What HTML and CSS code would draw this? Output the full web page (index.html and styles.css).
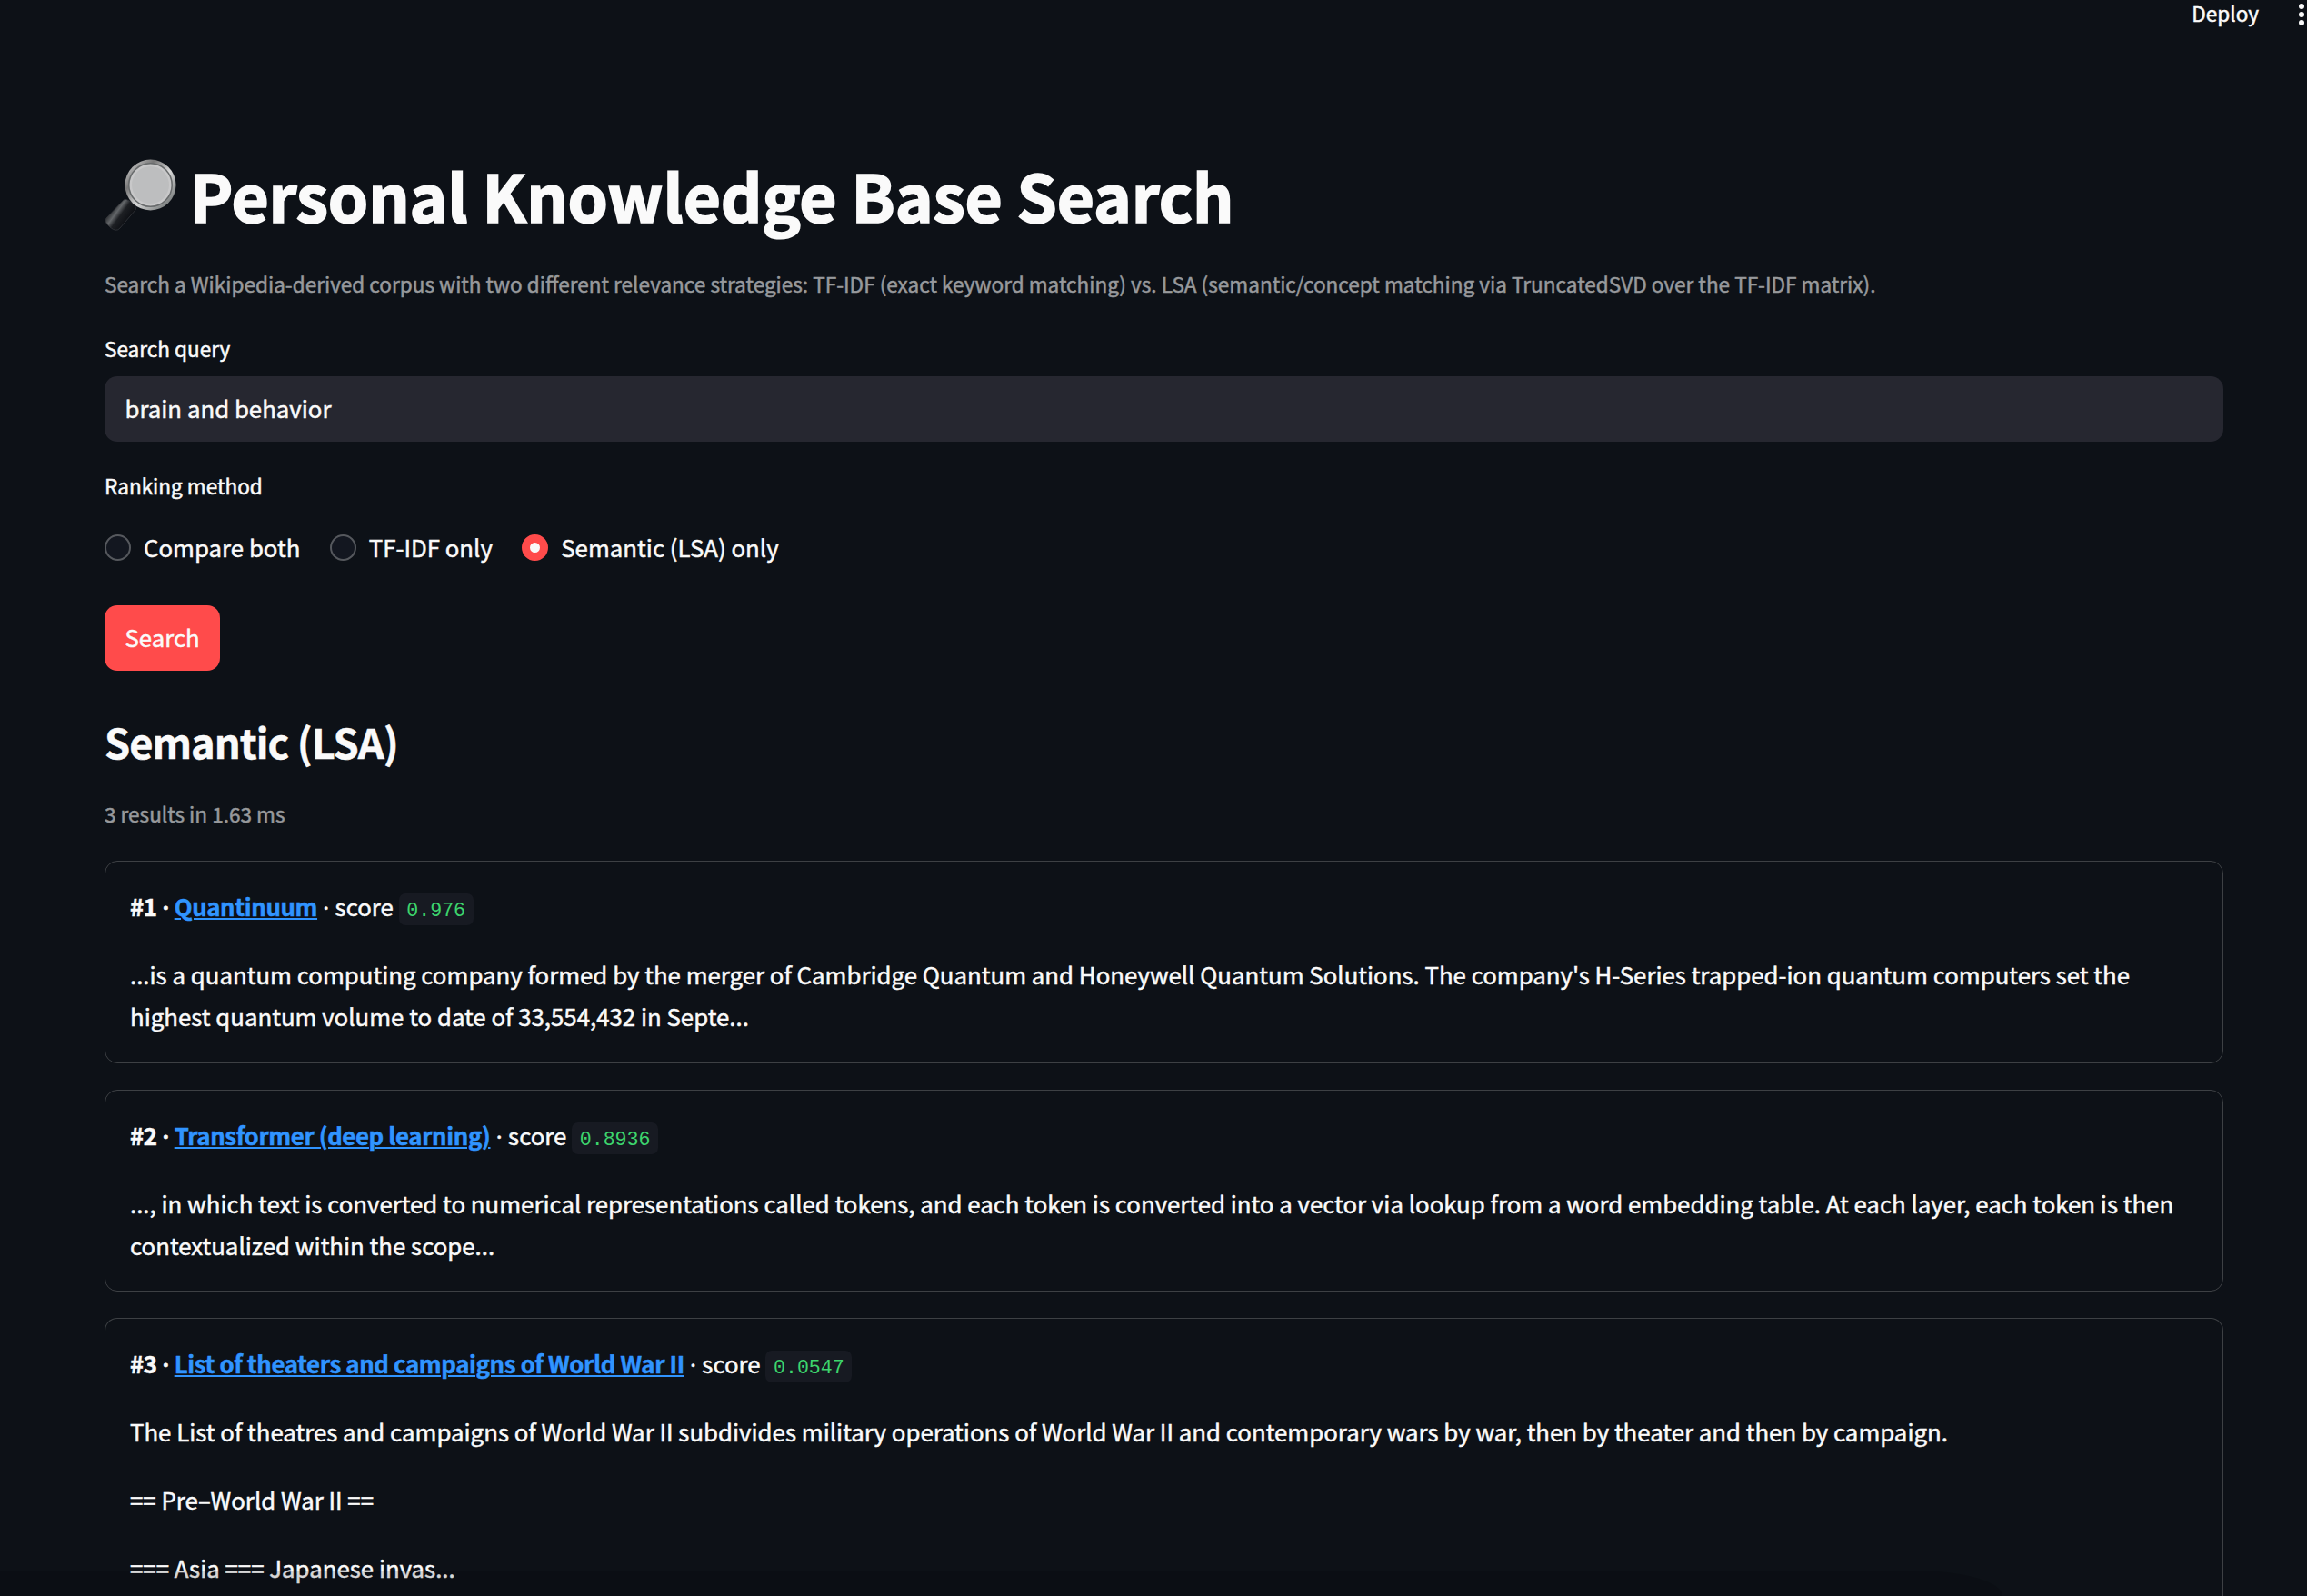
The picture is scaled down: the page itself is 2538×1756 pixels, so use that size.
FILE: index.html
```html
<!DOCTYPE html>
<html lang="en">
<head>
<meta charset="utf-8">
<title>Personal Knowledge Base Search</title>
<link rel="stylesheet" href="styles.css">
</head>
<body>
<header class="toolbar">
  <span class="deploy">Deploy</span>
  <svg class="menu" width="6" height="24" viewBox="0 0 6 24"><circle cx="3" cy="3" r="3"/><circle cx="3" cy="12" r="3"/><circle cx="3" cy="21" r="3"/></svg>
</header>
<main class="page">
  <h1 class="title">
    <svg class="lens" width="80" height="80" viewBox="0 0 80 80">
      <defs>
        <linearGradient id="rim" x1="0" y1="0" x2="1" y2="1"><stop offset="0" stop-color="#e8e8e8"/><stop offset=".3" stop-color="#777"/><stop offset=".55" stop-color="#d8d8d8"/><stop offset="1" stop-color="#555b5b"/></linearGradient>
        <linearGradient id="grip" gradientUnits="userSpaceOnUse" x1="8" y1="52" x2="30" y2="68"><stop offset="0" stop-color="#16181b"/><stop offset=".3" stop-color="#64676a"/><stop offset=".5" stop-color="#1d1f23"/><stop offset="1" stop-color="#07090e"/></linearGradient>
      </defs>
      <path d="M25 46l9 8-3 4-9-8z" fill="#8d9090"/>
      <path d="M21 45Q24 43 30 48Q36 53 34 56L17 76Q13 81 6 75Q-1 69 2 65Z" fill="url(#grip)" stroke="#33363b" stroke-width=".8"/>
      <circle cx="50.500" cy="28.500" r="28" fill="url(#rim)"/>
      <circle cx="50.500" cy="28.500" r="24.500" fill="#686b6c"/>
      <circle cx="50.500" cy="28.500" r="23" fill="#c8c8c9"/>
      <circle cx="50.500" cy="28.500" r="20.500" fill="#bdbebf"/>
    </svg>
    <span class="title-text">Personal Knowledge Base Search</span>
  </h1>
  <p class="caption intro">Search a Wikipedia-derived corpus with two different relevance strategies: TF-IDF (exact keyword matching) vs. LSA (semantic/concept matching via TruncatedSVD over the TF-IDF matrix).</p>
  <label class="label" for="query">Search query</label>
  <input class="query" id="query" type="text" value="brain and behavior">
  <div class="label method">Ranking method</div>
  <div class="radios">
    <label class="radio"><span class="dot"></span><span>Compare both</span></label>
    <label class="radio"><span class="dot"></span><span>TF-IDF only</span></label>
    <label class="radio"><span class="dot dot-on"></span><span>Semantic (LSA) only</span></label>
  </div>
  <button class="search" type="button">Search</button>
  <h2 class="heading">Semantic (LSA)</h2>
  <p class="caption count">3 results in 1.63 ms</p>
  <section class="results">
    <article class="card">
      <p><b>#1 <i class="sep">·</i> <a href="#">Quantinuum</a></b> <i class="sep">·</i> score <code>0.976</code></p>
      <p>...is a quantum computing company formed by the merger of Cambridge Quantum and Honeywell Quantum Solutions. The company's H-Series trapped-ion quantum computers set the <br>highest quantum volume to date of 33,554,432 in Septe...</p>
    </article>
    <article class="card">
      <p><b>#2 <i class="sep">·</i> <a href="#">Transformer (deep learning)</a></b> <i class="sep">·</i> score <code>0.8936</code></p>
      <p>..., in which text is converted to numerical representations called tokens, and each token is converted into a vector via lookup from a word embedding table. At each layer, each token is then <br>contextualized within the scope...</p>
    </article>
    <article class="card">
      <p><b>#3 <i class="sep">·</i> <a href="#">List of theaters and campaigns of World War II</a></b> <i class="sep">·</i> score <code>0.0547</code></p>
      <p>The List of theatres and campaigns of World War II subdivides military operations of World War II and contemporary wars by war, then by theater and then by campaign.</p>
      <p>== Pre–World War II ==</p>
      <p>=== Asia === Japanese invas...</p>
    </article>
  </section>
</main>
<div class="shade"></div>
</body>
</html>
```

FILE: styles.css
```css
* { box-sizing: border-box; }
html, body { margin: 0; height: 1756px; overflow: hidden; }
body {
  background: #0d1117;
  color: #fafafa;
  font-family: "Noto Sans CJK SC", "Source Sans Pro", sans-serif;
  font-size: 25.8px;
  line-height: 46px;
  -webkit-text-stroke: 0.5px currentColor;
}
p, h1, h2 { margin: 0; }
.toolbar {
  height: 32px;
  display: flex;
  justify-content: flex-end;
  align-items: center;
  padding-right: 3px;
  gap: 44px;
}
.deploy { font-size: 22.56px; line-height: 28px; padding-bottom: 4px; }
.menu { fill: #fafafa; }
.page { padding: 0 92px 0 115px; }
.title {
  display: flex;
  align-items: center;
  height: 95px;
  margin-top: 135px;
  gap: 14px;
  font-size: 71px;
  line-height: 95px;
  font-weight: 700;
  letter-spacing: -0.13px;
  -webkit-text-stroke: 1.7px currentColor;
}
.caption { color: #97999c; font-size: 22.57px; line-height: 40px; white-space: nowrap; }
.intro { margin-top: 31px; }
.label { display: block; font-size: 22.56px; line-height: 32px; }
label.label { margin-top: 34px; }
.query {
  display: block;
  width: 100%;
  height: 72px;
  margin-top: 15px;
  padding: 0 22.5px 4px;
  border: 0;
  border-radius: 14px;
  background: #262730;
  color: inherit;
  font: inherit;
  -webkit-text-stroke: inherit;
}
.method { margin-top: 32px; }
.radios { display: flex; gap: 32.4px; margin-top: 29px; }
.radio { display: flex; align-items: center; gap: 14px; }
.dot { width: 29px; height: 29px; border-radius: 50%; border: 2px solid #55585d; background: #131720; }
.dot-on { border: 9px solid #ff4b4b; background: #fafafa; }
.search {
  display: block;
  height: 72px;
  margin-top: 41px;
  padding: 0 22.4px 2px;
  border: 0;
  border-radius: 14px;
  background: #ff4b4b;
  color: #fafafa;
  font: inherit;
  -webkit-text-stroke: inherit;
}
.heading {
  margin-top: 48px;
  font-size: 45.2px;
  line-height: 60px;
  font-weight: 700;
  letter-spacing: -0.98px;
}
.count { margin-top: 30px; }
.results { display: flex; flex-direction: column; gap: 28.8px; margin-top: 31px; }
.card { border: 1px solid #3d4044; border-radius: 14px; padding: 26px 27px; height: 222.8px; }
.card:last-child { height: 306px; border-bottom: 0; border-radius: 14px 14px 0 0; }
.card p { white-space: nowrap; margin-bottom: 29px; }
.card p:last-child { margin-bottom: 0; }
b { letter-spacing: -0.37px; }
.sep { display: inline-block; width: 8px; font-family: "Noto Sans", sans-serif; font-style: normal; line-height: 1; text-align: center; }
a { color: #3094ff; text-underline-offset: 2px; text-decoration-thickness: 2px; }
code {
  font-family: "Liberation Mono", monospace;
  font-size: 21.6px;
  line-height: 1;
  padding: 7px 8.6px 4px;
  border-radius: 7px;
  background: #171a22;
  color: #3dd56d;
  -webkit-text-stroke: 0;
}
.shade {
  position: fixed;
  left: 0;
  bottom: 0;
  width: 2203px;
  height: 28px;
  border-top-right-radius: 95px 28px;
  background: rgba(0, 0, 5, 0.14);
}
```
